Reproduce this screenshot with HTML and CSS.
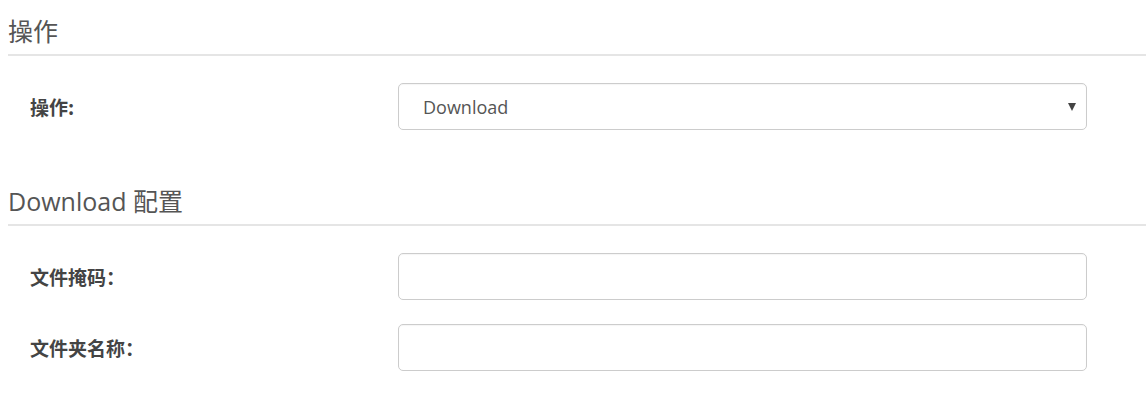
FILE: index.html
```html
<!DOCTYPE html>
<html lang="zh-CN">
<head>
<meta charset="utf-8">
<title>Download 配置</title>
<link rel="stylesheet" href="styles.css">
</head>
<body>
<div class="page">
  <section class="section">
    <h2 class="section-title">操作</h2>
    <div class="form-rows">
      <div class="form-row">
        <label class="form-label">操作:</label>
        <div class="select-box">
          <span class="select-value">Download</span>
          <span class="select-caret" aria-hidden="true"></span>
        </div>
      </div>
    </div>
  </section>
  <section class="section">
    <h2 class="section-title">Download 配置</h2>
    <div class="form-rows">
      <div class="form-row">
        <label class="form-label">文件掩码：</label>
        <input class="text-input" type="text">
      </div>
      <div class="form-row">
        <label class="form-label">文件夹名称：</label>
        <input class="text-input" type="text">
      </div>
    </div>
  </section>
</div>
</body>
</html>
```

FILE: styles.css
```css
* { box-sizing: border-box; }

html, body {
  margin: 0;
  padding: 0;
  background: #ffffff;
}

body {
  font-family: "Open Sans", "Noto Sans CJK SC", sans-serif;
  color: #555555;
}

.page {
  padding-left: 8px;
}

.section {
  margin-bottom: 40px;
}

.section-title {
  margin: 0;
  padding: 18px 0 10px 0;
  font-size: 25px;
  line-height: 26px;
  font-weight: 400;
  color: #555555;
  border-bottom: 2px solid #e5e5e5;
}

.form-rows {
  display: flex;
  flex-direction: column;
  gap: 24px;
  padding-top: 27px;
}

.form-row {
  display: flex;
  align-items: center;
}

.form-label {
  width: 390px;
  flex: none;
  padding-left: 22px;
  font-family: "Noto Sans CJK SC", "Open Sans", sans-serif;
  font-size: 19px;
  font-weight: 700;
  color: #444444;
}

.select-box,
.text-input {
  width: 689px;
  height: 47px;
  border: 1px solid #cccccc;
  border-radius: 5px;
  background: #ffffff;
  box-shadow: inset 0 1px 1px rgba(0, 0, 0, 0.04);
}

.select-box {
  display: flex;
  align-items: center;
  justify-content: space-between;
  padding: 0 10px 0 24px;
}

.select-value {
  font-size: 18px;
  color: #555555;
}

.select-caret {
  width: 0;
  height: 0;
  border-left: 4px solid transparent;
  border-right: 4px solid transparent;
  border-top: 8px solid #444444;
}

.text-input {
  display: block;
  padding: 0 24px;
  font-family: "Open Sans", sans-serif;
  font-size: 18px;
  color: #555555;
  outline: none;
}
```
